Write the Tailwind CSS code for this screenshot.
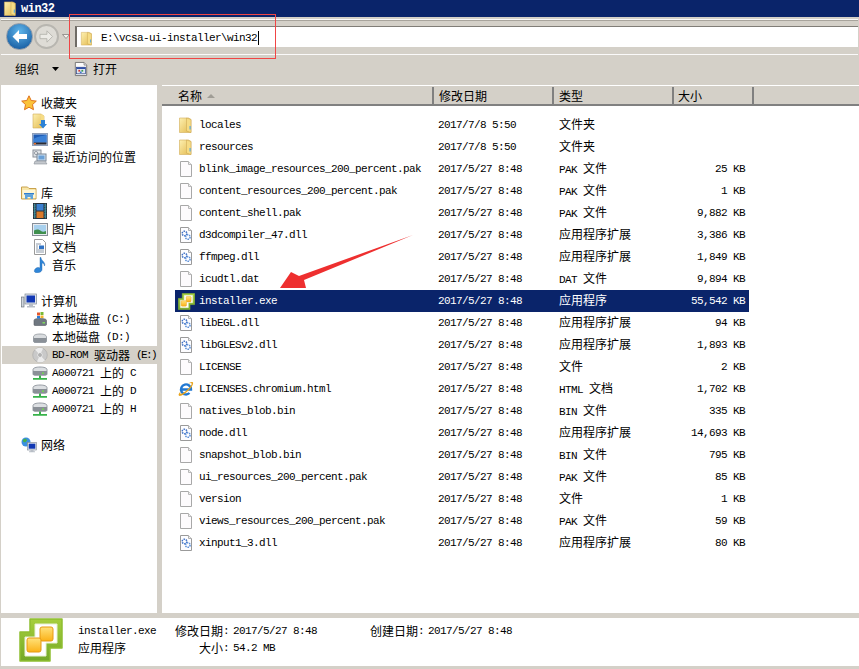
<!DOCTYPE html>
<html lang="zh-CN">
<head>
<meta charset="utf-8">
<title>win32</title>
<script src="https://cdn.jsdelivr.net/npm/@tailwindcss/browser@4"></script>
</head>
<body class="m-0 overflow-hidden">
<svg class="absolute w-0 h-0" aria-hidden="true">
  <defs>
    <linearGradient id="gy" x1="0" y1="0" x2="1" y2="1"><stop offset="0" stop-color="#fdf0b0"/><stop offset="1" stop-color="#e3b94e"/></linearGradient>
    <linearGradient id="gg" x1="0" y1="0" x2="0" y2="1"><stop offset="0" stop-color="#a6cf3d"/><stop offset="1" stop-color="#74a827"/></linearGradient>
    <linearGradient id="go" x1="0" y1="0" x2="0" y2="1"><stop offset="0" stop-color="#ffe27a"/><stop offset="1" stop-color="#fbb117"/></linearGradient>
    <symbol id="folder" viewBox="0 0 16 16"><path d="M1.500 1h9l2.500 1.500V15.500H1.500z" fill="url(#gy)" stroke="#d2ad58" stroke-width=".6"/><path d="M8.500 1l4.500 1.500V15.500L8.500 14z" fill="#f6dc85" stroke="#c9a24c" stroke-width=".5"/><path d="M11.500 9h1.200v3.500h-1.200z" fill="#5aa9dc"/></symbol>
    <symbol id="file" viewBox="0 0 16 16"><path d="M2.500 .5h8l3 3v12h-11z" fill="#fdfbfd" stroke="#a8a8a8"/><path d="M10.500 .5v3h3" fill="#eee" stroke="#b8b8b8"/></symbol>
    <symbol id="dll" viewBox="0 0 16 16"><path d="M2.500 .5h8l3 3v12h-11z" fill="#fdfdff" stroke="#9a9a9a"/><path d="M10.500 .5v3h3" fill="#eee" stroke="#b0b0b0"/><circle cx="6.500" cy="6.500" r="2.300" fill="none" stroke="#3d6fc4" stroke-width="1.500" stroke-dasharray="1.400 .8"/><circle cx="9.800" cy="10" r="2.300" fill="none" stroke="#5b8fd8" stroke-width="1.500" stroke-dasharray="1.400 .8"/></symbol>
    <symbol id="vs" viewBox="0 0 44 44"><path d="M11 1H43V30H31V43H1V14H11Z" fill="url(#gg)" stroke="#8fbe30" stroke-width="1.500" stroke-linejoin="round"/><path d="M16 6H38V25H27V38H6V19H16Z" fill="#fff" stroke="#e9f1d2" stroke-linejoin="round"/><rect x="21" y="9" width="13" height="14" rx="2" fill="url(#go)" stroke="#e69a12"/><rect x="8" y="20" width="14" height="14" rx="2" fill="url(#go)" stroke="#e69a12"/></symbol>
    <symbol id="ie" viewBox="0 0 16 16"><path d="M3.500 8.500h9.500A5 5 0 1 0 11.500 12" fill="none" stroke="#2278d2" stroke-width="2.400"/><path d="M.8 14.500C2 16 7 13 10.500 9.500S16 2.500 14.800 1.200C13.800.3 11.500 1.500 10.500 2.500c1.500-.7 3-.9 3.200 0 .3 1.500-3 5.500-6 7.700S2.500 13.500 2.200 12.300c-.1-.5.3-1.500.8-2.300C1.500 11.500 0 13.500.8 14.500z" fill="#e9a41b"/></symbol>
    <symbol id="star" viewBox="0 0 16 16"><path d="M8 .8l2.200 4.700 5.100.6-3.800 3.500 1 5.100L8 12.200l-4.500 2.500 1-5.100L.7 6.100l5.100-.6z" fill="#fbc33a" stroke="#e0731c" stroke-linejoin="round"/></symbol>
    <symbol id="dl" viewBox="0 0 16 16"><path d="M1 1h8l3 2v11l-3 1H1z" fill="url(#gy)" stroke="#d2ad58" stroke-width=".6"/><path d="M9 1l3 2v6H9z" fill="#f6dc85"/><path d="M9 7h4v4h2l-4 4.500L7 11h2z" fill="#2c82d6"/></symbol>
    <symbol id="desk" viewBox="0 0 16 16"><rect x=".5" y="2.500" width="15" height="12" fill="#c5d1e4" stroke="#8d9db8"/><rect x="1.500" y="3.500" width="13" height="8" fill="#1f5cb4"/><path d="M1.500 8c5-3 9-3 13-4v7.500h-13z" fill="#3a80d6"/><rect x="1.500" y="11.500" width="13" height="2" fill="#2b2b33"/><rect x="2" y="12" width="2" height="1.500" fill="#e46d2a"/></symbol>
    <symbol id="recent" viewBox="0 0 16 16"><rect x="1" y="1" width="8" height="7" fill="#dfe3e7" stroke="#8a9099"/><rect x="5" y="5" width="9" height="7" fill="#cfe0f0" stroke="#7b8694"/><rect x="6.500" y="6.500" width="6" height="4" fill="#6aa0d6"/><path d="M3 12h10l2 3H2z" fill="#c4c8cd" stroke="#8a9099" stroke-width=".6"/><circle cx="4" cy="4" r="1.500" fill="#fff" stroke="#6c7480" stroke-width=".7"/></symbol>
    <symbol id="lib" viewBox="0 0 16 16"><path d="M.5 3V2h6l1.500 1.500h7V14H.5z" fill="#f8e6a8" stroke="#c9a24c"/><rect x="1.500" y="5" width="13" height="8" fill="#fff6d4"/><path d="M4 14V9.500h8V14h-2.500v-2h-3v2z" fill="#5fa3dc"/><path d="M3 9.500h10v-1.500H3z" fill="#2f7fd0"/></symbol>
    <symbol id="video" viewBox="0 0 16 16"><rect x="1" y="0" width="14" height="16" fill="#27323a"/><rect x="2" y="1" width="1.300" height="14" fill="#2f7f8c" stroke="#9cd" stroke-width=".3" stroke-dasharray="1.500 1"/><rect x="12.700" y="1" width="1.300" height="14" fill="#2f7f8c" stroke="#9cd" stroke-width=".3" stroke-dasharray="1.500 1"/><rect x="4.500" y="1" width="7" height="6.500" fill="#3b80d0"/><rect x="4.500" y="8.500" width="7" height="6.500" fill="#d97a2b"/></symbol>
    <symbol id="pic" viewBox="0 0 16 16"><rect x=".5" y="2.500" width="15" height="12" fill="#e7ebf0" stroke="#868d97"/><rect x="2" y="4" width="12" height="9" fill="#a7d0ee"/><path d="M2 13V9.500C5 8 7 8.500 9 10s3 .500 5 0V13z" fill="#3f8f4e"/></symbol>
    <symbol id="doc" viewBox="0 0 16 16"><path d="M2.500 .5h8l3 3v12h-11z" fill="#fff" stroke="#9a9a9a"/><path d="M4 5h5M4 7h2M4 9h2M4 11h8M4 13h8" stroke="#8e9aa8"/><rect x="7" y="6.500" width="5" height="3.500" fill="#2f72c4"/></symbol>
    <symbol id="music" viewBox="0 0 16 16"><path d="M9 .5C9 4 14 5 12.500 9 12.500 7 11 6 10 6v6.500C10 15 6 16.500 3.500 15.500S3 11 5.500 10.500c1-.2 2 0 2.500.5V.5z" fill="#2f86d8" stroke="#1b5fa8" stroke-width=".4"/></symbol>
    <symbol id="pc" viewBox="0 0 16 16"><rect x="4" y="1" width="11.500" height="10" fill="#dfe4ea" stroke="#7e8894" stroke-width=".7"/><rect x="5.500" y="2.500" width="8.500" height="7" fill="#1238b4"/><path d="M8 11h4v2h2v1.500H6V13h2z" fill="#b8bec6"/><rect x=".5" y="4" width="2.500" height="10" fill="#cfd5dc" stroke="#5c6670" stroke-width=".6"/></symbol>
    <symbol id="sys" viewBox="0 0 16 16"><path d="M2 9.500C2 8 4 7.500 8 7.500S14.500 8 14.500 9.500v4c0 .8-.8 1-1.500 1H3c-.7 0-1-.3-1-1z" fill="#6f7780" stroke="#555b62" stroke-width=".6"/><rect x="10.500" y="11" width="2.500" height="1.500" fill="#7ddb5c"/><path d="M5 1.500h3v3H5z" fill="#e4582a"/><path d="M8.500 1h3v3h-3z" fill="#7ab833"/><path d="M5 5h3v2.500H5z" fill="#2c7cd6"/><path d="M8.500 4.500h3V7h-3z" fill="#f3b52a"/></symbol>
    <symbol id="disk" viewBox="0 0 16 16"><path d="M1.500 8C1.500 6 4 5 8 5s6.500 1 6.500 3v4c0 1-.8 1.500-1.500 1.500H3c-.7 0-1.500-.5-1.500-1.500z" fill="#d9dcdf" stroke="#8e949a" stroke-width=".8"/><path d="M1.500 9h13v3c0 1-.8 1.500-1.500 1.500H3c-.7 0-1.500-.5-1.500-1.500z" fill="#8a9097"/></symbol>
    <symbol id="cd" viewBox="0 0 16 16"><circle cx="8" cy="8" r="7.300" fill="#c9c9c9" stroke="#a0a0a0" stroke-width=".5"/><path d="M8 8L3 2.500A7.300 7.300 0 0 1 11 1.500zM8 8l5 5.500A7.300 7.300 0 0 1 5 14.500z" fill="#ececec"/><circle cx="8" cy="8" r="2.200" fill="#8c8c8c" stroke="#eee"/><circle cx="8" cy="8" r=".8" fill="#e4e4e4"/></symbol>
    <symbol id="net" viewBox="0 0 16 16"><path d="M1 4.500C1 3 4 2 8 2s7 1 7 2.500V9c0 .8-.7 1.200-1.500 1.200h-11C1.700 10.200 1 9.800 1 9z" fill="#dcdfe2" stroke="#828890" stroke-width=".8"/><path d="M1 6h14v3c0 .8-.7 1.200-1.500 1.200h-11C1.700 10.200 1 9.800 1 9z" fill="#8a9097"/><rect x="10" y="7.500" width="2" height="1.300" fill="#6fe04a"/><path d="M7 10.500h2V13h6v1.800H1V13h6z" fill="#37b24a"/></symbol>
    <symbol id="globe" viewBox="0 0 16 16"><circle cx="5" cy="5" r="4.500" fill="#3a8fe0"/><path d="M2 2.500l3-1 1 2-2 2-2-1zM6 6l2.500 1-1 2.500-1.500-1z" fill="#46b04a"/><rect x="6.500" y="5.500" width="9" height="7.500" fill="#dfe4ea" stroke="#7e8894" stroke-width=".6"/><rect x="7.700" y="6.700" width="6.600" height="5" fill="#1238b4"/><path d="M9.500 13h3v1.200h1.500v1H8v-1h1.500z" fill="#b8bec6"/></symbol>
    <symbol id="open" viewBox="0 0 16 16"><path d="M1.500 .5h10l3 3v12h-13z" fill="#fbfbfb" stroke="#6b6b6b"/><path d="M11.500 .5v3h3" fill="#ddd" stroke="#888"/><rect x="3" y="6" width="10" height="7.500" fill="#dfe6f2" stroke="#2a3f80" stroke-width=".8"/><rect x="3" y="6" width="10" height="2" fill="#2e4fa6"/><rect x="5" y="9" width="2" height="2" fill="#d8382a"/><rect x="8.500" y="9" width="2" height="2" fill="#37a04a"/><rect x="6.700" y="11" width="2" height="1.500" fill="#2c6fd0"/></symbol>
  </defs>
</svg>

<div class="relative flex flex-col w-[859px] h-[669px] overflow-hidden bg-[#d4d0c8] text-black font-['Liberation_Mono',monospace] text-[11px] tracking-[-0.6px] [&_svg]:shrink-0 [&_b]:font-normal [&_b]:text-[12px] [&_b]:tracking-normal [&_b]:font-['Noto_Sans_CJK_SC',sans-serif]">

  <!-- title bar -->
  <div class="flex items-center h-[17px] bg-[#0a246a] text-white">
    <svg class="ml-[3px] w-[15px] h-[15px]"><use href="#folder"/></svg>
    <span class="ml-[3px] font-bold text-[12px] tracking-[-0.5px]">win32</span>
  </div>

  <!-- navigation bar -->
  <div class="flex items-center h-[36px] mx-[1px] mt-[2px] border-y border-y-white/90 shadow-[inset_0_1px_0_#a8a49c] pb-[1px]">
    <div class="ml-[5px] flex items-center justify-center w-[27px] h-[27px] rounded-full bg-[radial-gradient(circle_at_50%_30%,#5fb5ea,#0b4e96)] border border-[#8d99a8]">
      <svg class="w-[17px] h-[15px]" viewBox="0 0 17 15"><path d="M8 1L1.500 7.500 8 14v-4h8V5H8z" fill="#fff"/></svg>
    </div>
    <div class="ml-[1px] flex items-center justify-center w-[25px] h-[25px] rounded-full bg-[#dedcd6] border-2 border-[#b8b6b0]">
      <svg class="w-[15px] h-[13px]" viewBox="0 0 17 15"><path d="M9 1l6.500 6.500L9 14v-4H1V5h8z" fill="#ecebe6" stroke="#b4b2ac"/></svg>
    </div>
    <svg class="ml-[3px] w-[8px] h-[5px]" viewBox="0 0 8 5"><path d="M.5.5h7L4 4.500z" fill="#f3f2ee" stroke="#85827c" stroke-width=".8"/></svg>
    <div class="ml-[5px] flex-1 flex items-center h-[21px] pt-[2px] bg-white border-l-[2px] border-l-[#6f6c66] border-t border-t-[#807d77]">
      <svg class="ml-[3px] w-[14px] h-[15px]"><use href="#folder"/></svg>
      <span class="ml-[7px] whitespace-pre">E:\vcsa-ui-installer\win32</span>
      <span class="ml-[1px] w-px h-[14px] bg-black"></span>
    </div>
  </div>

  <!-- toolbar -->
  <div class="flex items-center h-[28px] pl-[15px]">
    <b>组织</b>
    <svg class="ml-[13px] w-[7px] h-[4px]" viewBox="0 0 7 4"><path d="M0 0h7L3.500 4z" fill="#000"/></svg>
    <svg class="ml-[15px] w-[14px] h-[16px]"><use href="#open"/></svg>
    <b class="ml-[5px]">打开</b>
  </div>

  <!-- panes -->
  <div class="flex flex-1 min-h-0 mt-[2px] gap-[5px] pl-[1px]">
    <nav class="w-[156px] bg-white pt-[9px] overflow-hidden">
      <div class="flex items-center h-[18px] pl-[20px]"><svg class="w-4 h-4"><use href="#star"/></svg><b class="ml-[4px]">收藏夹</b></div>
      <div class="flex items-center h-[18px] pl-[31px]"><svg class="w-4 h-4"><use href="#dl"/></svg><b class="ml-[4px]">下载</b></div>
      <div class="flex items-center h-[18px] pl-[31px]"><svg class="w-4 h-4"><use href="#desk"/></svg><b class="ml-[4px]">桌面</b></div>
      <div class="flex items-center h-[18px] pl-[31px]"><svg class="w-4 h-4"><use href="#recent"/></svg><b class="ml-[4px]">最近访问的位置</b></div>
      <div class="h-[18px]"></div>
      <div class="flex items-center h-[18px] pl-[20px]"><svg class="w-4 h-4"><use href="#lib"/></svg><b class="ml-[4px]">库</b></div>
      <div class="flex items-center h-[18px] pl-[31px]"><svg class="w-4 h-4"><use href="#video"/></svg><b class="ml-[4px]">视频</b></div>
      <div class="flex items-center h-[18px] pl-[31px]"><svg class="w-4 h-4"><use href="#pic"/></svg><b class="ml-[4px]">图片</b></div>
      <div class="flex items-center h-[18px] pl-[31px]"><svg class="w-4 h-4"><use href="#doc"/></svg><b class="ml-[4px]">文档</b></div>
      <div class="flex items-center h-[18px] pl-[31px]"><svg class="w-4 h-4"><use href="#music"/></svg><b class="ml-[4px]">音乐</b></div>
      <div class="h-[18px]"></div>
      <div class="flex items-center h-[18px] pl-[20px]"><svg class="w-4 h-4"><use href="#pc"/></svg><b class="ml-[4px]">计算机</b></div>
      <div class="flex items-center h-[18px] pl-[31px] whitespace-pre"><svg class="w-4 h-4"><use href="#sys"/></svg><b class="ml-[4px]">本地磁盘</b> (C:)</div>
      <div class="flex items-center h-[18px] pl-[31px] whitespace-pre"><svg class="w-4 h-4"><use href="#disk"/></svg><b class="ml-[4px]">本地磁盘</b> (D:)</div>
      <div class="flex items-center h-[18px] pl-[30px] ml-[1px] bg-[#d4d0c8] whitespace-pre"><svg class="w-4 h-4"><use href="#cd"/></svg><span class="ml-[4px]">BD-ROM </span><b>驱动器</b><span> </span><span class="tracking-[-1.6px]">(E:)</span></div>
      <div class="flex items-center h-[18px] pl-[31px] whitespace-pre"><svg class="w-4 h-4"><use href="#net"/></svg><span class="ml-[4px]">A000721 </span><b>上的</b> C</div>
      <div class="flex items-center h-[18px] pl-[31px] whitespace-pre"><svg class="w-4 h-4"><use href="#net"/></svg><span class="ml-[4px]">A000721 </span><b>上的</b> D</div>
      <div class="flex items-center h-[18px] pl-[31px] whitespace-pre"><svg class="w-4 h-4"><use href="#net"/></svg><span class="ml-[4px]">A000721 </span><b>上的</b> H</div>
      <div class="h-[18px]"></div>
      <div class="flex items-center h-[18px] pl-[20px]"><svg class="w-4 h-4"><use href="#globe"/></svg><b class="ml-[4px]">网络</b></div>
    </nav>

    <main class="flex-1 bg-white flex flex-col min-w-0">
      <div class="flex h-[21px] pt-[1px] bg-[#d4d0c8] border-t border-t-white border-b-[2px] border-b-[#808080] shrink-0">
        <div class="flex items-center w-[272px] pl-[16px] border-r-2 border-r-[#808080]"><b>名称</b><svg class="ml-[5px] w-[8px] h-[4px]" viewBox="0 0 8 4"><path d="M4 0l4 4H0z" fill="#a09d96"/></svg></div>
        <div class="flex items-center w-[120px] pl-[5px] border-r-2 border-r-[#808080]"><b>修改日期</b></div>
        <div class="flex items-center w-[120px] pl-[5px] border-r-2 border-r-[#808080]"><b>类型</b></div>
        <div class="flex items-center w-[80px] pl-[4px] border-r-2 border-r-[#808080]"><b>大小</b></div>
        <div class="flex-1"></div>
      </div>
      <div class="pl-[13px] pt-[8px] [&>div>div]:whitespace-pre">
        <div class="flex items-center h-[22px] w-[574px]"><div class="w-[24px] pl-[3px]"><svg class="block w-4 h-4"><use href="#folder"/></svg></div><div class="w-[239px]">locales</div><div class="w-[121px]">2017/7/8 5:50</div><div class="w-[100px]"><b>文件夹</b></div><div class="w-[86px] text-right"></div></div>
        <div class="flex items-center h-[22px] w-[574px]"><div class="w-[24px] pl-[3px]"><svg class="block w-4 h-4"><use href="#folder"/></svg></div><div class="w-[239px]">resources</div><div class="w-[121px]">2017/7/8 5:50</div><div class="w-[100px]"><b>文件夹</b></div><div class="w-[86px] text-right"></div></div>
        <div class="flex items-center h-[22px] w-[574px]"><div class="w-[24px] pl-[3px]"><svg class="block w-4 h-4"><use href="#file"/></svg></div><div class="w-[239px]">blink_image_resources_200_percent.pak</div><div class="w-[121px]">2017/5/27 8:48</div><div class="w-[100px]">PAK <b>文件</b></div><div class="w-[86px] text-right">25 KB</div></div>
        <div class="flex items-center h-[22px] w-[574px]"><div class="w-[24px] pl-[3px]"><svg class="block w-4 h-4"><use href="#file"/></svg></div><div class="w-[239px]">content_resources_200_percent.pak</div><div class="w-[121px]">2017/5/27 8:48</div><div class="w-[100px]">PAK <b>文件</b></div><div class="w-[86px] text-right">1 KB</div></div>
        <div class="flex items-center h-[22px] w-[574px]"><div class="w-[24px] pl-[3px]"><svg class="block w-4 h-4"><use href="#file"/></svg></div><div class="w-[239px]">content_shell.pak</div><div class="w-[121px]">2017/5/27 8:48</div><div class="w-[100px]">PAK <b>文件</b></div><div class="w-[86px] text-right">9,882 KB</div></div>
        <div class="flex items-center h-[22px] w-[574px]"><div class="w-[24px] pl-[3px]"><svg class="block w-4 h-4"><use href="#dll"/></svg></div><div class="w-[239px]">d3dcompiler_47.dll</div><div class="w-[121px]">2017/5/27 8:48</div><div class="w-[100px]"><b>应用程序扩展</b></div><div class="w-[86px] text-right">3,386 KB</div></div>
        <div class="flex items-center h-[22px] w-[574px]"><div class="w-[24px] pl-[3px]"><svg class="block w-4 h-4"><use href="#dll"/></svg></div><div class="w-[239px]">ffmpeg.dll</div><div class="w-[121px]">2017/5/27 8:48</div><div class="w-[100px]"><b>应用程序扩展</b></div><div class="w-[86px] text-right">1,849 KB</div></div>
        <div class="flex items-center h-[22px] w-[574px]"><div class="w-[24px] pl-[3px]"><svg class="block w-4 h-4"><use href="#file"/></svg></div><div class="w-[239px]">icudtl.dat</div><div class="w-[121px]">2017/5/27 8:48</div><div class="w-[100px]">DAT <b>文件</b></div><div class="w-[86px] text-right">9,894 KB</div></div>
        <div class="flex items-center h-[22px] w-[574px] bg-[#0a246a] text-white"><div class="w-[24px] pl-[3px]"><svg class="block w-[17px] h-[17px]"><use href="#vs"/></svg></div><div class="w-[239px]">installer.exe</div><div class="w-[121px]">2017/5/27 8:48</div><div class="w-[100px]"><b>应用程序</b></div><div class="w-[86px] text-right">55,542 KB</div></div>
        <div class="flex items-center h-[22px] w-[574px]"><div class="w-[24px] pl-[3px]"><svg class="block w-4 h-4"><use href="#dll"/></svg></div><div class="w-[239px]">libEGL.dll</div><div class="w-[121px]">2017/5/27 8:48</div><div class="w-[100px]"><b>应用程序扩展</b></div><div class="w-[86px] text-right">94 KB</div></div>
        <div class="flex items-center h-[22px] w-[574px]"><div class="w-[24px] pl-[3px]"><svg class="block w-4 h-4"><use href="#dll"/></svg></div><div class="w-[239px]">libGLESv2.dll</div><div class="w-[121px]">2017/5/27 8:48</div><div class="w-[100px]"><b>应用程序扩展</b></div><div class="w-[86px] text-right">1,893 KB</div></div>
        <div class="flex items-center h-[22px] w-[574px]"><div class="w-[24px] pl-[3px]"><svg class="block w-4 h-4"><use href="#file"/></svg></div><div class="w-[239px]">LICENSE</div><div class="w-[121px]">2017/5/27 8:48</div><div class="w-[100px]"><b>文件</b></div><div class="w-[86px] text-right">2 KB</div></div>
        <div class="flex items-center h-[22px] w-[574px]"><div class="w-[24px] pl-[3px]"><svg class="block w-4 h-4"><use href="#ie"/></svg></div><div class="w-[239px]">LICENSES.chromium.html</div><div class="w-[121px]">2017/5/27 8:48</div><div class="w-[100px]">HTML <b>文档</b></div><div class="w-[86px] text-right">1,702 KB</div></div>
        <div class="flex items-center h-[22px] w-[574px]"><div class="w-[24px] pl-[3px]"><svg class="block w-4 h-4"><use href="#file"/></svg></div><div class="w-[239px]">natives_blob.bin</div><div class="w-[121px]">2017/5/27 8:48</div><div class="w-[100px]">BIN <b>文件</b></div><div class="w-[86px] text-right">335 KB</div></div>
        <div class="flex items-center h-[22px] w-[574px]"><div class="w-[24px] pl-[3px]"><svg class="block w-4 h-4"><use href="#dll"/></svg></div><div class="w-[239px]">node.dll</div><div class="w-[121px]">2017/5/27 8:48</div><div class="w-[100px]"><b>应用程序扩展</b></div><div class="w-[86px] text-right">14,693 KB</div></div>
        <div class="flex items-center h-[22px] w-[574px]"><div class="w-[24px] pl-[3px]"><svg class="block w-4 h-4"><use href="#file"/></svg></div><div class="w-[239px]">snapshot_blob.bin</div><div class="w-[121px]">2017/5/27 8:48</div><div class="w-[100px]">BIN <b>文件</b></div><div class="w-[86px] text-right">795 KB</div></div>
        <div class="flex items-center h-[22px] w-[574px]"><div class="w-[24px] pl-[3px]"><svg class="block w-4 h-4"><use href="#file"/></svg></div><div class="w-[239px]">ui_resources_200_percent.pak</div><div class="w-[121px]">2017/5/27 8:48</div><div class="w-[100px]">PAK <b>文件</b></div><div class="w-[86px] text-right">85 KB</div></div>
        <div class="flex items-center h-[22px] w-[574px]"><div class="w-[24px] pl-[3px]"><svg class="block w-4 h-4"><use href="#file"/></svg></div><div class="w-[239px]">version</div><div class="w-[121px]">2017/5/27 8:48</div><div class="w-[100px]"><b>文件</b></div><div class="w-[86px] text-right">1 KB</div></div>
        <div class="flex items-center h-[22px] w-[574px]"><div class="w-[24px] pl-[3px]"><svg class="block w-4 h-4"><use href="#file"/></svg></div><div class="w-[239px]">views_resources_200_percent.pak</div><div class="w-[121px]">2017/5/27 8:48</div><div class="w-[100px]">PAK <b>文件</b></div><div class="w-[86px] text-right">59 KB</div></div>
        <div class="flex items-center h-[22px] w-[574px]"><div class="w-[24px] pl-[3px]"><svg class="block w-4 h-4"><use href="#dll"/></svg></div><div class="w-[239px]">xinput1_3.dll</div><div class="w-[121px]">2017/5/27 8:48</div><div class="w-[100px]"><b>应用程序扩展</b></div><div class="w-[86px] text-right">80 KB</div></div>
      </div>
    </main>
  </div>

  <!-- details pane -->
  <div class="mt-[5px] h-[48px] mb-[3px] ml-[1px] bg-white flex shrink-0">
    <svg class="ml-[18px] w-[44px] h-[44px]"><use href="#vs"/></svg>
    <div class="ml-[15px] pt-[4px] flex flex-col whitespace-pre">
      <div class="flex items-center h-[18px]"><span class="w-[97px]">installer.exe</span><b class="w-[48px]">修改日期</b><span class="w-[10px]">:</span><span class="w-[137px]">2017/5/27 8:48</span><b class="w-[48px]">创建日期</b><span class="w-[10px]">:</span><span>2017/5/27 8:48</span></div>
      <div class="flex items-center h-[18px] -mt-px"><b class="w-[121px]">应用程序</b><b class="w-[24px]">大小</b><span class="w-[10px]">:</span><span>54.2 MB</span></div>
    </div>
  </div>

  <!-- red annotation rectangle -->
  <div class="absolute left-[69px] top-[14px] w-[207px] h-[45px] border border-[#f04545]"></div>
  <!-- red annotation arrow -->
  <svg class="absolute left-[275px] top-[230px] w-[145px] h-[65px]" viewBox="0 0 145 65">
    <path d="M138 5L29 50L31 58L5 58L16 42L24 46Z" fill="#ee2f2f"/>
  </svg>
</div>
</body>
</html>
